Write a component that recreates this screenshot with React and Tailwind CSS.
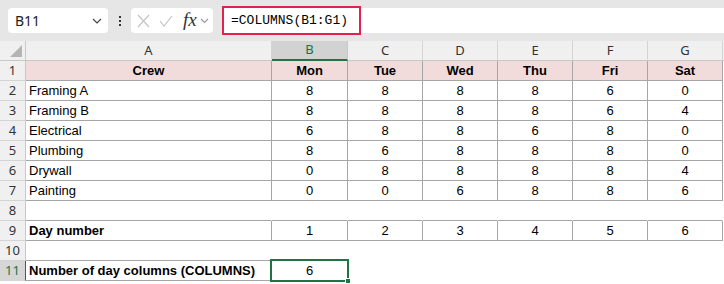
import React from "react";

const cols = [
  { l: "A", w: "w-[246px]" },
  { l: "B", w: "w-[76px]" },
  { l: "C", w: "w-[75px]" },
  { l: "D", w: "w-[75px]" },
  { l: "E", w: "w-[75px]" },
  { l: "F", w: "w-[75px]" },
  { l: "G", w: "w-[75px]" },
];

const data = [
  ["Framing A", 8, 8, 8, 8, 6, 0],
  ["Framing B", 8, 8, 8, 8, 6, 4],
  ["Electrical", 6, 8, 8, 6, 8, 0],
  ["Plumbing", 8, 6, 8, 8, 8, 0],
  ["Drywall", 0, 8, 8, 8, 8, 4],
  ["Painting", 0, 0, 6, 8, 8, 6],
];

const font = { fontFamily: '"Liberation Sans", Arial, sans-serif' };

function Cell({ w, children, br, bb, bold, left, pink, extra = "" }) {
  return (
    <div
      className={`${w} h-full shrink-0 box-border flex items-center pt-[1px] overflow-visible whitespace-nowrap text-[13px] text-black ${
        left ? "justify-start pl-[3px]" : "justify-center"
      } ${bold ? "font-bold" : ""} ${pink ? "bg-[#f2dcdb]" : "bg-white"} border-r border-b ${
        br ? "border-r-[#a6a6a6]" : "border-r-transparent"
      } ${bb ? "border-b-[#a6a6a6]" : "border-b-transparent"} ${extra}`}
      style={font}
    >
      {children}
    </div>
  );
}

function RowHeader({ n, active }) {
  return (
    <div
      className={`w-[26px] h-full shrink-0 box-border flex items-center justify-center pt-[1px] border-b border-b-[#d4d4d4] border-r ${
        active
          ? "bg-[#d6d6d6] text-[#217346] border-r-[#217346]"
          : "bg-[#f0f0f0] text-[#333] border-r-[#c8c8c8]"
      } text-[13px]`}
      style={{ fontFamily: '"Noto Sans", "Open Sans", sans-serif' }}
    >
      {n}
    </div>
  );
}

function Row({ children, n, active }) {
  return (
    <div className="flex h-[20px]">
      <RowHeader n={n} active={active} />
      {children}
    </div>
  );
}

export default function App() {
  return (
    <div className="w-[724px] h-[284px] bg-white overflow-hidden relative">
      {/* formula bar */}
      <div className="h-[41px] bg-[#e6e6e6] flex items-start pt-[8px] relative">
        <div className="ml-[8px] w-[100px] h-[25px] bg-white rounded-[4px] flex items-center justify-between pl-[7px] pr-[6px]">
          <span
            className="text-[14px] text-[#222]"
            style={{ fontFamily: '"Noto Sans", "Open Sans", sans-serif' }}
          >
            B11
          </span>
          <svg width="10" height="6" viewBox="0 0 10 6">
            <path d="M1 1 L5 5 L9 1" fill="none" stroke="#444" strokeWidth="1.2" />
          </svg>
        </div>
        <div className="w-[23px] h-[25px] flex flex-col items-center justify-center gap-[2px]">
          <span className="w-[2px] h-[2px] bg-[#333]" />
          <span className="w-[2px] h-[2px] bg-[#333]" />
          <span className="w-[2px] h-[2px] bg-[#333]" />
        </div>
        <div className="w-[82px] h-[25px] bg-white rounded-[4px] flex items-center pl-[6px]">
          <svg width="13" height="14" viewBox="0 0 13 14">
            <path d="M1 1 L12 13 M12 1 L1 13" stroke="#c4c4c4" strokeWidth="1.2" fill="none" />
          </svg>
          <svg width="14" height="12" viewBox="0 0 14 12" className="ml-[9px]">
            <path d="M1 6 L5 11 L13 1" stroke="#c4c4c4" strokeWidth="1.2" fill="none" />
          </svg>
          <span
            className="ml-[10px] italic text-[19px] text-[#333] leading-none -mt-[2px]"
            style={{ fontFamily: '"Liberation Serif", "Times New Roman", serif' }}
          >
            fx
          </span>
          <svg width="9" height="6" viewBox="0 0 9 6" className="ml-[3px]">
            <path d="M1 1 L4.5 4.5 L8 1" fill="none" stroke="#999" strokeWidth="1.1" />
          </svg>
        </div>
        <div className="ml-[9px] flex-1 h-[25px] bg-white flex items-center">
          <span
            className="pl-[9px] text-[13px] text-black"
            style={{ fontFamily: '"Liberation Mono", "Courier New", monospace' }}
          >
            =COLUMNS(B1:G1)
          </span>
        </div>
        <div className="absolute left-[222px] top-[6px] w-[139px] h-[29px] border-2 border-[#e3204f]" />
      </div>

      {/* column headers */}
      <div className="flex h-[20px]">
        <div className="w-[26px] h-full shrink-0 box-border bg-[#f0f0f0] border-r border-b border-r-[#c8c8c8] border-b-[#c8c8c8] relative">
          <svg width="12" height="12" viewBox="0 0 12 12" className="absolute right-[3px] bottom-[3px]">
            <path d="M12 0 L12 12 L0 12 Z" fill="#b4b4b4" />
          </svg>
        </div>
        {cols.map((c) => (
          <div
            key={c.l}
            className={`${c.w} h-full shrink-0 box-border flex items-center justify-center text-[13px] border-r ${
              c.l === "B"
                ? "bg-[#d2d2d2] text-[#217346] border-b-2 border-b-[#217346] border-r-[#c8c8c8]"
                : "bg-[#f0f0f0] text-[#333] border-b border-b-[#c8c8c8] border-r-[#d4d4d4]"
            }`}
            style={{ fontFamily: '"Noto Sans", "Open Sans", sans-serif' }}
          >
            {c.l}
          </div>
        ))}
        <div className="flex-1 h-full bg-[#f0f0f0] border-b border-b-[#c8c8c8]" />
      </div>

      {/* row 1 */}
      <Row n={1}>
        {["Crew", "Mon", "Tue", "Wed", "Thu", "Fri", "Sat"].map((t, i) => (
          <Cell key={t} w={cols[i].w} br bb bold pink>
            {t}
          </Cell>
        ))}
      </Row>
      {data.map((r, ri) => (
        <Row n={ri + 2} key={ri}>
          {r.map((v, i) => (
            <Cell key={i} w={cols[i].w} br bb left={i === 0}>
              {v}
            </Cell>
          ))}
        </Row>
      ))}
      <Row n={8}>
        {cols.map((c, i) => (
          <Cell key={i} w={c.w} bb />
        ))}
      </Row>
      <Row n={9}>
        {["Day number", 1, 2, 3, 4, 5, 6].map((v, i) => (
          <Cell key={i} w={cols[i].w} br bb left={i === 0} bold={i === 0}>
            {v}
          </Cell>
        ))}
      </Row>
      <Row n={10}>
        {cols.map((c, i) => (
          <Cell key={i} w={c.w} bb={i < 2} />
        ))}
      </Row>
      <Row n={11} active>
        <Cell w={cols[0].w} br bb left bold>
          Number of day columns (COLUMNS)
        </Cell>
        <Cell w={cols[1].w} br bb>
          6
        </Cell>
        {cols.slice(2).map((c, i) => (
          <Cell key={i} w={c.w} />
        ))}
      </Row>

      {/* selection box */}
      <div className="absolute left-[270px] top-[259px] w-[79px] h-[23px] border-2 border-[#217346]" />
      <div className="absolute left-[345px] top-[278px] w-[6px] h-[6px] bg-[#217346] border border-white" />
    </div>
  );
}
